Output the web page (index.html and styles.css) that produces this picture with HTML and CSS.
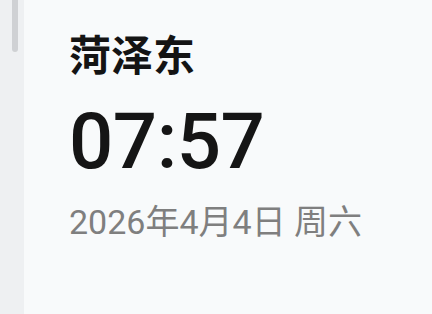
FILE: index.html
```html
<!DOCTYPE html>
<html lang="zh">
<head>
<meta charset="utf-8">
<link rel="stylesheet" href="styles.css">
</head>
<body>
<div class="page">
  <div class="rail"><div class="thumb"></div></div>
  <main class="card">
    <div class="station">菏泽东</div>
    <div class="clock">07:57</div>
    <div class="date">2026年4月4日 周六</div>
  </main>
</div>
</body>
</html>
```
FILE: styles.css
```css
html, body {
  margin: 0;
  padding: 0;
  width: 432px;
  height: 314px;
  overflow: hidden;
}
.page {
  display: flex;
  width: 432px;
  height: 314px;
  background: #f8fafb;
}
.rail {
  width: 24px;
  flex: none;
  background: #eef0f2;
  display: flex;
  justify-content: center;
}
.thumb {
  width: 6px;
  height: 52px;
  margin-left: 5px;
  background: #cfd1d4;
  border-radius: 0 0 3px 3px;
}
.card {
  flex: 1;
  padding: 32px 0 0 45px;
  display: flex;
  flex-direction: column;
  font-family: "Noto Sans CJK SC", "Noto Sans", sans-serif;
}
.station {
  font-size: 42px;
  line-height: 42px;
  font-weight: 700;
  color: #141414;
}
.clock {
  margin-top: 28px;
  font-family: Roboto, "Noto Sans", sans-serif;
  font-size: 78px;
  line-height: 80px;
  font-weight: 500;
  letter-spacing: -0.5px;
  color: #151515;
}
.date {
  margin-top: 23px;
  font-family: Roboto, "Noto Sans CJK SC", sans-serif;
  font-size: 34px;
  line-height: 34px;
  color: #7f7f7f;
}
```
